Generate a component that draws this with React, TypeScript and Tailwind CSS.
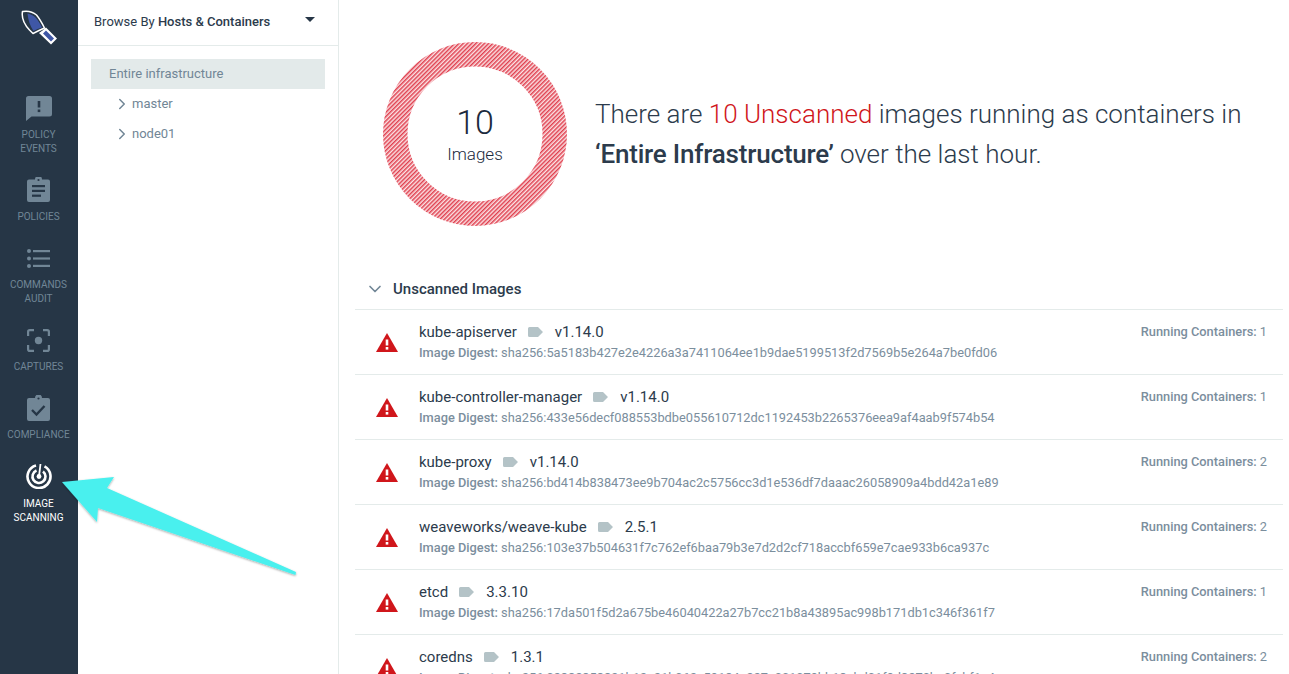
import React from 'react';
import { ChevronDown, ChevronRight } from 'lucide-react';

const images = [
  { name: 'kube-apiserver', tag: 'v1.14.0', digest: 'sha256:5a5183b427e2e4226a3a7411064ee1b9dae5199513f2d7569b5e264a7be0fd06', running: 1 },
  { name: 'kube-controller-manager', tag: 'v1.14.0', digest: 'sha256:433e56decf088553bdbe055610712dc1192453b2265376eea9af4aab9f574b54', running: 1 },
  { name: 'kube-proxy', tag: 'v1.14.0', digest: 'sha256:bd414b838473ee9b704ac2c5756cc3d1e536df7daaac26058909a4bdd42a1e89', running: 2 },
  { name: 'weaveworks/weave-kube', tag: '2.5.1', digest: 'sha256:103e37b504631f7c762ef6baa79b3e7d2d2cf718accbf659e7cae933b6ca937c', running: 2 },
  { name: 'etcd', tag: '3.3.10', digest: 'sha256:17da501f5d2a675be46040422a27b7cc21b8a43895ac998b171db1c346f361f7', running: 1 },
  { name: 'coredns', tag: '1.3.1', digest: 'sha256:02382353821b12c21b062c59184e227e001079bb13ebd01f9d3270ba0fcbf1e4', running: 2 },
];

// viewBox origin is the top-left of the logo at (20,10) in the page
const Logo = () => (
  <svg width="37" height="36" viewBox="0 0 37 36" fill="none">
    <path d="M1.500 1.500 C7 0.500 12 2 15.500 5 C18 8 21 13 23.500 18 L18 20.500 L12 23.500 L8.500 20 C3 14 0.500 7 1.500 1.500Z" fill="#263646" stroke="#fff" strokeWidth="1.500" strokeLinejoin="round" />
    <path d="M6.500 3.500 C10 4 13 6 15 8 C17.500 11 19.500 14.500 21 17.500 L16.500 19 L12.500 21 C9 16 7 9.500 6.500 3.500Z" fill="#3f57a6" />
    <path d="M21.500 20.500 L25 17.500 L36 28.500 L30 34.500 L18 23Z" fill="#fff" />
    <path d="M23.500 22 L25 20.500 L33 28.500 L30 31.500 L22 23.500Z" fill="#3f57a6" />
  </svg>
);

const EventsIcon = () => (
  <svg width="26" height="25" viewBox="0 0 26 25" fill="#718696">
    <path d="M2.500 0h21A2.500 2.500 0 0 1 26 2.500V18a2.500 2.500 0 0 1-2.500 2.500H5.500L0 25V2.500A2.500 2.500 0 0 1 2.500 0Z" />
    <rect x="11.700" y="5" width="2.600" height="6.500" fill="#263646" />
    <rect x="11.700" y="13.500" width="2.600" height="2.600" fill="#263646" />
  </svg>
);

const PoliciesIcon = () => (
  <svg width="23" height="25" viewBox="0 0 23 25" fill="#718696">
    <path d="M2 2.500h6a3.500 3.500 0 0 1 7 0h6a2 2 0 0 1 2 2V23a2 2 0 0 1-2 2H2a2 2 0 0 1-2-2V4.500a2 2 0 0 1 2-2Z" />
    <circle cx="11.500" cy="3" r="1.100" fill="#263646" />
    <rect x="5" y="8" width="13" height="2.200" fill="#263646" />
    <rect x="5" y="12.800" width="13" height="2.200" fill="#263646" />
    <rect x="5" y="17.600" width="9" height="2.200" fill="#263646" />
  </svg>
);

const AuditIcon = () => (
  <svg width="23" height="19" viewBox="0 0 23 19" fill="#718696">
    <circle cx="2" cy="2" r="2" />
    <circle cx="2" cy="9.500" r="2" />
    <circle cx="2" cy="17" r="2" />
    <rect x="6" y="1" width="17" height="2.200" />
    <rect x="6" y="8.400" width="17" height="2.200" />
    <rect x="6" y="15.800" width="17" height="2.200" />
  </svg>
);

const CaptureIcon = () => (
  <svg width="23" height="23" viewBox="0 0 23 23" fill="none" stroke="#718696" strokeWidth="2.200">
    <path d="M1.100 7V2.800a1.700 1.700 0 0 1 1.700-1.700H7M16 1.100h4.200a1.700 1.700 0 0 1 1.700 1.700V7M21.900 16v4.200a1.700 1.700 0 0 1-1.700 1.700H16M7 21.900H2.800a1.700 1.700 0 0 1-1.700-1.700V16" />
    <circle cx="11.500" cy="11.500" r="3.700" fill="#718696" stroke="none" />
  </svg>
);

const ComplianceIcon = () => (
  <svg width="23" height="26" viewBox="0 0 23 26" fill="#718696">
    <path d="M2 3h6a3.500 3.500 0 0 1 7 0h6a2 2 0 0 1 2 2V24a2 2 0 0 1-2 2H2a2 2 0 0 1-2-2V5a2 2 0 0 1 2-2Z" />
    <circle cx="11.500" cy="3.500" r="1.100" fill="#263646" />
    <path d="M5 15l4.500 4.500L17.500 11" fill="none" stroke="#263646" strokeWidth="2.400" />
  </svg>
);

const ScanIcon = () => (
  <svg width="26" height="26" viewBox="0 0 26 26" fill="none" stroke="#fff" strokeWidth="2.600">
    <path d="M10 2.400 A11.500 11.500 0 1 0 18.500 3.400" />
    <path d="M10.500 7.500 A6.500 6.500 0 1 0 17 8.400" />
    <circle cx="13" cy="13.500" r="2.400" fill="#fff" stroke="none" />
    <path d="M13 13.500L14.500 1" strokeWidth="1.800" />
  </svg>
);

const NavItem = ({ icon, label, active, className, iconClass }: { icon: React.ReactNode; label: string[]; active?: boolean; className: string; iconClass?: string }) => (
  <div className={`flex flex-col items-center ${className}`}>
    <div className={`flex items-end justify-center h-[28px] ${iconClass ?? ''}`}>{icon}</div>
    <div className={`mt-[7px] text-center text-[10px] leading-[14px] ${active ? 'text-white' : 'text-[#718696]'}`}>
      {label.map(l => <div key={l}>{l}</div>)}
    </div>
  </div>
);

const Warning = () => (
  <svg width="22" height="19" viewBox="0 0 22 19">
    <path d="M11 0 L22 19 H0 Z" fill="#d0161b" />
    <rect x="9.700" y="6.500" width="2.600" height="6" fill="#fff" />
    <rect x="9.700" y="14" width="2.600" height="2.600" fill="#fff" />
  </svg>
);

const TagIcon = () => (
  <svg width="15" height="10" viewBox="0 0 15 10">
    <path d="M1.500 0H10L15 5 10 10H1.500A1.500 1.500 0 0 1 0 8.500v-7A1.500 1.500 0 0 1 1.500 0Z" fill="#b4c3c7" />
  </svg>
);

const Donut = () => (
  <div className="relative w-[184px] h-[184px] shrink-0">
    <svg width="184" height="184" viewBox="0 0 184 184">
      <defs>
        <pattern id="hatch" width="3" height="3" patternUnits="userSpaceOnUse" patternTransform="rotate(-45)">
          <rect width="3" height="3" fill="#fbe3e5" />
          <rect width="3" height="1.500" fill="#e0404f" />
        </pattern>
      </defs>
      <circle cx="92" cy="92" r="79.750" fill="none" stroke="url(#hatch)" strokeWidth="24.500" />
    </svg>
    <div className="absolute inset-0 flex flex-col items-center text-[#1b2a3d]">
      <div className="mt-[60px] text-[34px] leading-[40px] font-light">10</div>
      <div className="mt-[1px] text-[17px] leading-[22px] font-light">Images</div>
    </div>
  </div>
);

export default function App() {
  return (
    <div className="relative flex h-[674px] w-[1289px] overflow-hidden bg-white font-['Roboto',sans-serif]">
      <aside className="w-[78px] shrink-0 bg-[#263646] flex flex-col items-center pr-[1px]">
        <div className="mt-[10px] h-[36px] ml-[1px]"><Logo /></div>
        <NavItem className="mt-[47px]" icon={<EventsIcon />} label={['POLICY', 'EVENTS']} />
        <NavItem className="mt-[19px]" iconClass="pb-[1px]" icon={<PoliciesIcon />} label={['POLICIES']} />
        <NavItem className="mt-[19px]" iconClass="pb-[3px]" icon={<AuditIcon />} label={['COMMANDS', 'AUDIT']} />
        <NavItem className="mt-[19px]" iconClass="pb-[1px]" icon={<CaptureIcon />} label={['CAPTURES']} />
        <NavItem className="mt-[19px]" icon={<ComplianceIcon />} label={['COMPLIANCE']} />
        <NavItem className="mt-[20px]" active iconClass="pb-[1px]" icon={<ScanIcon />} label={['IMAGE', 'SCANNING']} />
      </aside>

      <nav className="w-[261px] shrink-0 border-r border-[#e4ebea]">
        <div className="flex h-[46px] items-center justify-between border-b border-[#e4ebea] pl-[16px] pr-[23px] pb-[1px] text-[13px] text-[#2c3b4c]">
          <span>Browse By <span className="font-medium">Hosts &amp; Containers</span></span>
          <span className="h-0 w-0 border-x-[5px] border-t-[5px] border-x-transparent border-t-[#263646] mb-[5px]" />
        </div>
        <div className="ml-[13px] mr-[13px] mt-[13px] text-[13px] text-[#718696]">
          <div className="flex h-[30px] items-center bg-[#e3eaea] pl-[18px]">Entire infrastructure</div>
          {['master', 'node01'].map(n => (
            <div key={n} className="flex h-[30px] items-center pl-[22px]">
              <ChevronRight size={18} strokeWidth={2} className="mr-[1px] -mt-[1px]" />
              {n}
            </div>
          ))}
        </div>
      </nav>

      <main className="flex-1 pl-[16px] pr-[6px]">
        <div className="flex items-center h-[268px] pl-[28px] pb-[1px]">
          <Donut />
          <div className="ml-[28px] text-[26px] leading-[40px] font-light text-[#2c3b4c]">
            <div>There are <span className="text-[#d0161b]">10 Unscanned</span> images running as containers in</div>
            <div><span className="font-medium tracking-[-0.2px]">‘Entire Infrastructure’</span> over the last hour.</div>
          </div>
        </div>
        <div className="flex h-[42px] items-center border-b border-[#e4ebea] pt-[1px] text-[#2c3b4c]">
          <ChevronDown size={20} strokeWidth={2} className="ml-[10px] text-[#718696]" />
          <span className="ml-[8px] text-[15px] font-medium">Unscanned Images</span>
        </div>
        {images.map(img => (
          <div key={img.name} className="flex h-[65px] border-b border-[#e4ebea]">
            <div className="w-[64px] pl-[21px] pt-[23px] shrink-0"><Warning /></div>
            <div className="flex-1 pt-[11px]">
              <div className="flex items-center text-[15px] leading-[22px] text-[#2c3b4c]">
                <span>{img.name}</span>
                <span className="ml-[11px] mr-[12px]"><TagIcon /></span>
                <span>{img.tag}</span>
              </div>
              <div className="text-[12.800px] leading-[19px] text-[#7b8e9d]">
                <span className="font-medium">Image Digest:</span> {img.digest}
              </div>
            </div>
            <div className="pt-[14px] pr-[16px] text-[12.800px] leading-[16px] text-[#7b8e9d]">
              <span className="font-medium">Running Containers:</span> {img.running}
            </div>
          </div>
        ))}
      </main>

      <svg className="absolute left-[60px] top-[470px] pointer-events-none" width="245" height="115" viewBox="0 0 245 115">
        <defs>
          <filter id="arrowShadow" x="-5%" y="-5%" width="110%" height="120%">
            <feDropShadow dx="0" dy="1" stdDeviation="1" floodColor="#000" floodOpacity="0.35" />
          </filter>
        </defs>
        <path d="M2 12 L54 7 L47 18 L236 102 L235.500 105 L38 38 L37 52 Z" fill="#4af0ee" filter="url(#arrowShadow)" />
      </svg>
    </div>
  );
}
